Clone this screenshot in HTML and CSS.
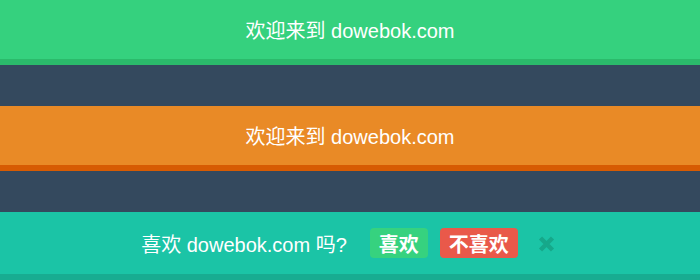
FILE: index.html
```html
<!DOCTYPE html>
<html lang="zh">
<head>
<meta charset="utf-8">
<title>dowebok</title>
<link rel="stylesheet" href="styles.css">
</head>
<body>
<div class="page">
  <div class="bar bar-green">欢迎来到 dowebok.com</div>
  <div class="bar bar-orange">欢迎来到 dowebok.com</div>
  <div class="bar bar-teal">
    <span class="question">喜欢 dowebok.com 吗?</span>
    <span class="btn btn-yes">喜欢</span>
    <span class="btn btn-no">不喜欢</span>
    <span class="close" aria-label="关闭">
      <svg width="17" height="16" viewBox="0 0 17 16"><path d="M2.5 2 L14.5 14 M14.5 2 L2.5 14" stroke="#16a88a" stroke-width="4.4" stroke-linecap="butt" fill="none"/></svg>
    </span>
  </div>
</div>
</body>
</html>
```

FILE: styles.css
```css
html, body {
  margin: 0;
  padding: 0;
}
body {
  background: #34495e;
  font-family: "Liberation Sans", "Noto Sans CJK SC", sans-serif;
  color: #fff;
}
.page {
  display: flex;
  flex-direction: column;
  gap: 41px;
  height: 280px;
  overflow: hidden;
}
.bar {
  display: flex;
  align-items: center;
  justify-content: center;
  height: 59px;
  font-size: 20px;
  box-sizing: content-box;
}
.bar-green {
  background: #35d17e;
  border-bottom: 6px solid #2bba6b;
}
.bar-orange {
  background: #e98a26;
  border-bottom: 6px solid #d75b02;
}
.bar-teal {
  height: 62px;
  background: #1bc4a6;
  border-bottom: 6px solid #18ac91;
}
.question {
  margin-right: 23px;
}
.btn {
  display: flex;
  align-items: center;
  height: 30px;
  padding: 0 9px;
  border-radius: 4px;
  font-weight: bold;
  margin-right: 12px;
}
.btn-yes {
  background: #36d27f;
}
.btn-no {
  background: #e9594a;
  margin-right: 20px;
}
.close {
  display: flex;
  width: 17px;
  height: 16px;
  margin-top: 2px;
  margin-right: 4px;
}
```
